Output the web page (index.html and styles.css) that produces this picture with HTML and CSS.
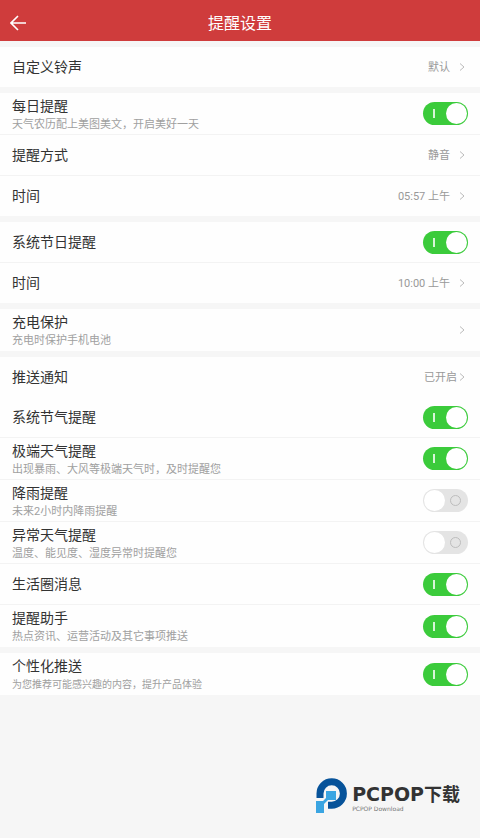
FILE: index.html
```html
<!DOCTYPE html>
<html lang="zh-CN">
<head>
<meta charset="utf-8">
<meta name="viewport" content="width=device-width, initial-scale=1">
<title>提醒设置</title>
<link rel="stylesheet" href="styles.css">
</head>
<body>
<header class="bar">
  <button class="back" type="button" aria-label="返回">
    <svg width="16" height="16" viewBox="0 0 16 16"><path d="M8 1 1 8l7 7M1 8h15"/></svg>
  </button>
  <h1 class="bar-title">提醒设置</h1>
</header>
<main class="groups">
  <section class="group">
    <a class="row" href="#"><span class="name">自定义铃声</span><span class="value">默认</span><svg class="chevron" viewBox="0 0 6 8"><path d="M1 0.500 5 4 1 7.500"/></svg></a>
  </section>
  <section class="group">
    <label class="row tall"><span class="text"><span class="name">每日提醒</span><span class="note">天气农历配上美图美文，开启美好一天</span></span><input class="switch" type="checkbox" checked></label>
    <a class="row" href="#"><span class="name">提醒方式</span><span class="value">静音</span><svg class="chevron" viewBox="0 0 6 8"><path d="M1 0.500 5 4 1 7.500"/></svg></a>
    <a class="row" href="#"><span class="name">时间</span><span class="value">05:57 上午</span><svg class="chevron" viewBox="0 0 6 8"><path d="M1 0.500 5 4 1 7.500"/></svg></a>
  </section>
  <section class="group">
    <label class="row"><span class="name">系统节日提醒</span><input class="switch" type="checkbox" checked></label>
    <a class="row" href="#"><span class="name">时间</span><span class="value">10:00 上午</span><svg class="chevron" viewBox="0 0 6 8"><path d="M1 0.500 5 4 1 7.500"/></svg></a>
  </section>
  <section class="group">
    <a class="row tall" href="#"><span class="text"><span class="name">充电保护</span><span class="note">充电时保护手机电池</span></span><svg class="chevron" viewBox="0 0 6 8"><path d="M1 0.500 5 4 1 7.500"/></svg></a>
  </section>
  <section class="group">
    <a class="row plain" href="#"><span class="name">推送通知</span><span class="value close">已开启</span><svg class="chevron" viewBox="0 0 6 8"><path d="M1 0.500 5 4 1 7.500"/></svg></a>
    <label class="row"><span class="name">系统节气提醒</span><input class="switch" type="checkbox" checked></label>
    <label class="row tall"><span class="text"><span class="name">极端天气提醒</span><span class="note">出现暴雨、大风等极端天气时，及时提醒您</span></span><input class="switch" type="checkbox" checked></label>
    <label class="row tall"><span class="text"><span class="name">降雨提醒</span><span class="note">未来2小时内降雨提醒</span></span><input class="switch" type="checkbox"></label>
    <label class="row tall"><span class="text"><span class="name">异常天气提醒</span><span class="note">温度、能见度、湿度异常时提醒您</span></span><input class="switch" type="checkbox"></label>
    <label class="row"><span class="name">生活圈消息</span><input class="switch" type="checkbox" checked></label>
    <label class="row tall"><span class="text"><span class="name">提醒助手</span><span class="note">热点资讯、运营活动及其它事项推送</span></span><input class="switch" type="checkbox" checked></label>
  </section>
  <section class="group">
    <label class="row tall"><span class="text"><span class="name">个性化推送</span><span class="note small">为您推荐可能感兴趣的内容，提升产品体验</span></span><input class="switch" type="checkbox" checked></label>
  </section>
</main>
<footer class="brand">
  <svg class="brand-mark" width="32" height="36" viewBox="0 0 32 36">
    <path class="ring" d="M4 20V15.500A11.700 11.700 0 1 1 15.700 27.200H12"/>
    <path class="pixels" d="M10 13h10v9h-8l-4 4v9H0V23h7l3-3z"/>
  </svg>
  <div class="brand-text">
    <span class="brand-name"><span class="brand-latin">PCPOP</span>下载</span>
    <span class="brand-sub">PCPOP Download</span>
  </div>
</footer>
</body>
</html>
```

FILE: styles.css
```css
* {
  box-sizing: border-box;
}

body {
  margin: 0;
  min-height: 100vh;
  display: flex;
  flex-direction: column;
  background: #f6f6f6;
  color: #333;
  font-family: Roboto, "Noto Sans CJK SC", sans-serif;
}

.bar {
  display: grid;
  grid-template-columns: 48px 1fr 48px;
  align-items: center;
  height: 41px;
  padding-top: 4px;
  background: #cf3c3c;
  color: #fff;
}

.back {
  display: flex;
  padding: 0 0 0 10px;
  border: 0;
  background: none;
}

.back svg {
  fill: none;
  stroke: #fff;
  stroke-width: 1.6;
}

.bar-title {
  margin: 0;
  padding-top: 2px;
  font-size: 16px;
  font-weight: 400;
  line-height: 24px;
  text-align: center;
}

.groups {
  display: flex;
  flex-direction: column;
  gap: 6px;
  padding-top: 6px;
}

.group {
  background: #fefefe;
}

.row {
  display: flex;
  align-items: center;
  min-height: 41px;
  padding: 0 12px;
  border-bottom: 1px solid #f3f3f3;
  color: inherit;
  text-decoration: none;
}

.row.plain,
.row:last-child {
  min-height: 40px;
  border-bottom: 0;
}

.row.tall {
  min-height: 42px;
}

.text {
  display: flex;
  flex-direction: column;
  padding-top: 2px;
}

.name {
  font-size: 14px;
  line-height: 20px;
}

.note {
  color: #a0a0a0;
  font-size: 11px;
  line-height: 18px;
}

.note.small {
  font-size: 10px;
}

.value {
  margin: 0 9px 0 auto;
  padding-top: 2px;
  color: #999;
  font-size: 11px;
  line-height: 20px;
}

.value.close {
  margin-right: 2px;
}

.chevron {
  width: 6px;
  height: 8px;
  margin: 0 3px 0 0;
  fill: none;
  stroke: #bbb;
}

.text + .chevron {
  margin-left: auto;
}

.switch {
  appearance: none;
  display: flex;
  align-items: center;
  justify-content: space-between;
  flex: none;
  width: 45px;
  height: 23px;
  margin: 0 0 0 auto;
  padding: 0 7px 0 1px;
  border-radius: 12px;
  background: #e4e4e4;
}

.switch::before,
.switch::after {
  content: "";
  border-radius: 50%;
}

.switch::before {
  width: 21px;
  height: 21px;
  background: #fff;
}

.switch::after {
  width: 9px;
  height: 9px;
  border: 1px solid #bdbdbd;
}

.switch:checked {
  flex-direction: row-reverse;
  padding: 0 1px 0 10px;
  background: #3bcb3b;
}

.switch:checked::after {
  width: 2px;
  border: 0;
  border-radius: 0;
  background: #d8f5d8;
}

.brand {
  display: flex;
  align-items: flex-start;
  gap: 4px;
  margin: auto 20px 24px auto;
}

.brand-mark .ring {
  fill: none;
  stroke: #07539a;
  stroke-width: 7;
}

.brand-mark .pixels {
  fill: #3aa5e2;
}

.brand-text {
  display: flex;
  flex-direction: column;
  padding-top: 6px;
}

.brand-name {
  font-family: "DejaVu Sans", "Noto Sans CJK SC", sans-serif;
  font-size: 18px;
  font-weight: 700;
  line-height: 20px;
}

.brand-latin {
  font-size: 19px;
}

.brand-sub {
  color: #777;
  font-family: "DejaVu Sans", sans-serif;
  font-size: 6px;
  line-height: 8px;
}
```
